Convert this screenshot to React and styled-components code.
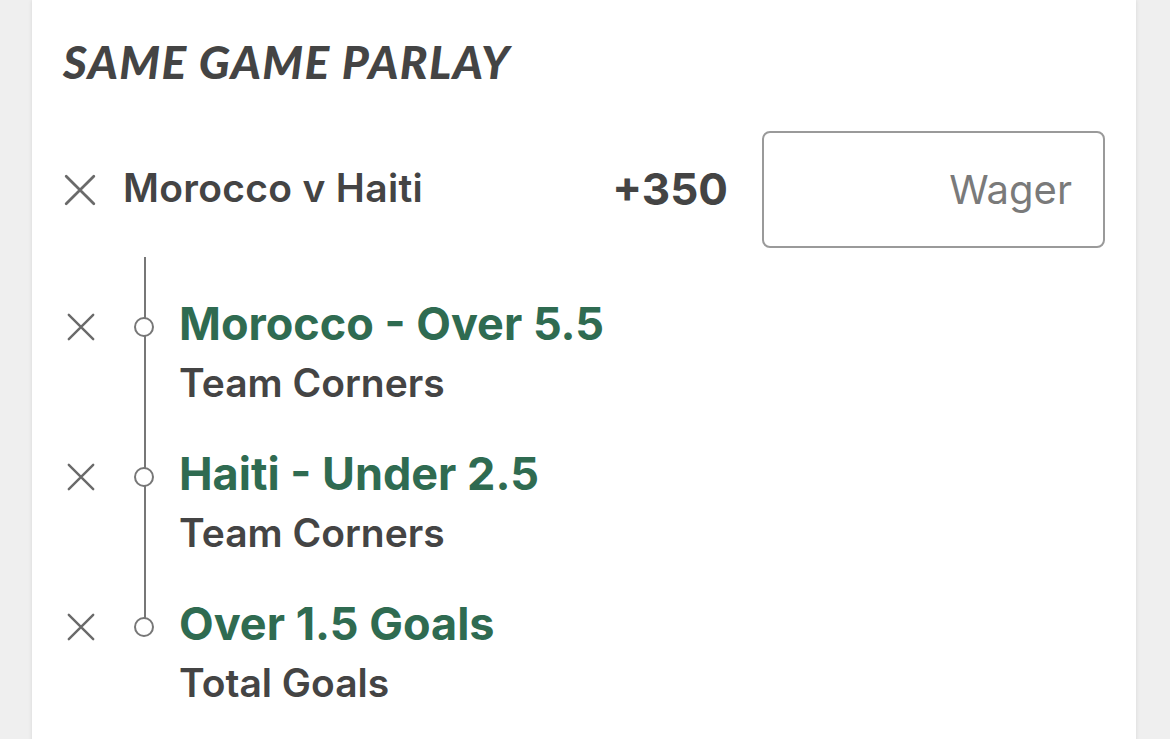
import styled, { createGlobalStyle } from "styled-components";

const GlobalStyle = createGlobalStyle`
  html, body {
    margin: 0;
    padding: 0;
    background: #efefef;
    font-family: Inter, Roboto, "Liberation Sans", sans-serif;
    overflow: hidden;
  }
`;

const legs = [
  { pick: "Morocco - Over 5.5", market: "Team Corners" },
  { pick: "Haiti - Under 2.5", market: "Team Corners" },
  { pick: "Over 1.5 Goals", market: "Total Goals" },
];

const CloseIcon = ({ size }) => (
  <svg width={size} height={size} viewBox="0 0 32 32" fill="none">
    <path d="M3 3 L29 29 M29 3 L3 29" stroke="#6a6a6a" strokeWidth="2.6" strokeLinecap="round" />
  </svg>
);

const SameGameParlay = () => {
  return (
    <Card>
      <Title>SAME GAME PARLAY</Title>

      <Header>
        <CloseButton $size={34}>
          <CloseIcon size={34} />
        </CloseButton>
        <Match>Morocco v Haiti</Match>
        <Odds>+350</Odds>
        <Wager placeholder="Wager" />
      </Header>

      <Legs>
        {legs.map((leg, i) => (
          <Leg key={i} $last={i === legs.length - 1}>
            <CloseButton $size={30}>
              <CloseIcon size={30} />
            </CloseButton>
            <Node />
            <LegText>
              <Pick>{leg.pick}</Pick>
              <Market>{leg.market}</Market>
            </LegText>
          </Leg>
        ))}
      </Legs>
    </Card>
  );
};

const Card = styled.div`
  margin-left: 32px;
  width: 1104px;
  min-height: 100vh;
  background: #fff;
  box-shadow: 0 0 4px rgba(0, 0, 0, 0.1);
  padding: 36px 31px 0 31px;
  box-sizing: border-box;
`;

const Title = styled.h1`
  margin: 0;
  font-family: Lato, "Open Sans", sans-serif;
  font-style: italic;
  font-weight: 900;
  font-size: 46px;
  line-height: 52px;
  color: #444;
  letter-spacing: 1.4px;
`;

const Header = styled.div`
  display: flex;
  align-items: center;
  margin-top: 43px;
  height: 117px;
`;

const CloseButton = styled.div`
  width: ${(p) => p.$size}px;
  height: ${(p) => p.$size}px;
  display: flex;
  align-items: center;
  justify-content: center;
  flex-shrink: 0;
`;

const Match = styled.div`
  margin-left: 26px;
  font-size: 39px;
  font-weight: 600;
  color: #444;
  flex: 1;
  margin-top: -4px;
  letter-spacing: 0.3px;
`;

const Odds = styled.div`
  font-size: 44px;
  font-weight: 700;
  color: #444;
  margin-right: 34px;
  margin-top: -2px;
`;

const Wager = styled.input`
  width: 343px;
  height: 117px;
  box-sizing: border-box;
  border: 2px solid #9a9a9a;
  border-radius: 8px;
  padding: 0 31px;
  text-align: right;
  font-family: Inter, Roboto, "Liberation Sans", sans-serif;
  font-size: 40px;
  color: #444;
  outline: none;
  &::placeholder {
    color: #7a7a7a;
  }
`;

const Legs = styled.div`
  position: relative;
  margin-top: 9px;
  padding-top: 50px;
  display: flex;
  flex-direction: column;
  &::before {
    content: "";
    position: absolute;
    left: 81px;
    top: 0;
    bottom: 0;
    width: 2px;
    background: #777;
  }
`;

const Leg = styled.div`
  position: relative;
  display: flex;
  align-items: flex-start;
  height: 150px;
  ${(p) =>
    p.$last &&
    `
    &::before {
      content: "";
      position: absolute;
      left: 81px;
      top: 20px;
      bottom: 0;
      width: 2px;
      background: #fff;
    }
  `}
  & > ${CloseButton} {
    margin-left: 3px;
    margin-top: 5px;
  }
`;

const Node = styled.div`
  position: relative;
  z-index: 1;
  width: 16px;
  height: 16px;
  border: 2px solid #777;
  border-radius: 50%;
  background: #fff;
  margin-left: 38px;
  margin-top: 10px;
  flex-shrink: 0;
`;

const LegText = styled.div`
  margin-left: 25px;
  margin-top: -10px;
`;

const Pick = styled.div`
  font-size: 45px;
  font-weight: 700;
  color: #2f6b51;
  line-height: 54px;
`;

const Market = styled.div`
  margin-top: 9px;
  font-size: 39px;
  font-weight: 600;
  color: #444;
  line-height: 46px;
`;

export default function App() {
  return (
    <>
      <GlobalStyle />
      <SameGameParlay />
    </>
  );
}
